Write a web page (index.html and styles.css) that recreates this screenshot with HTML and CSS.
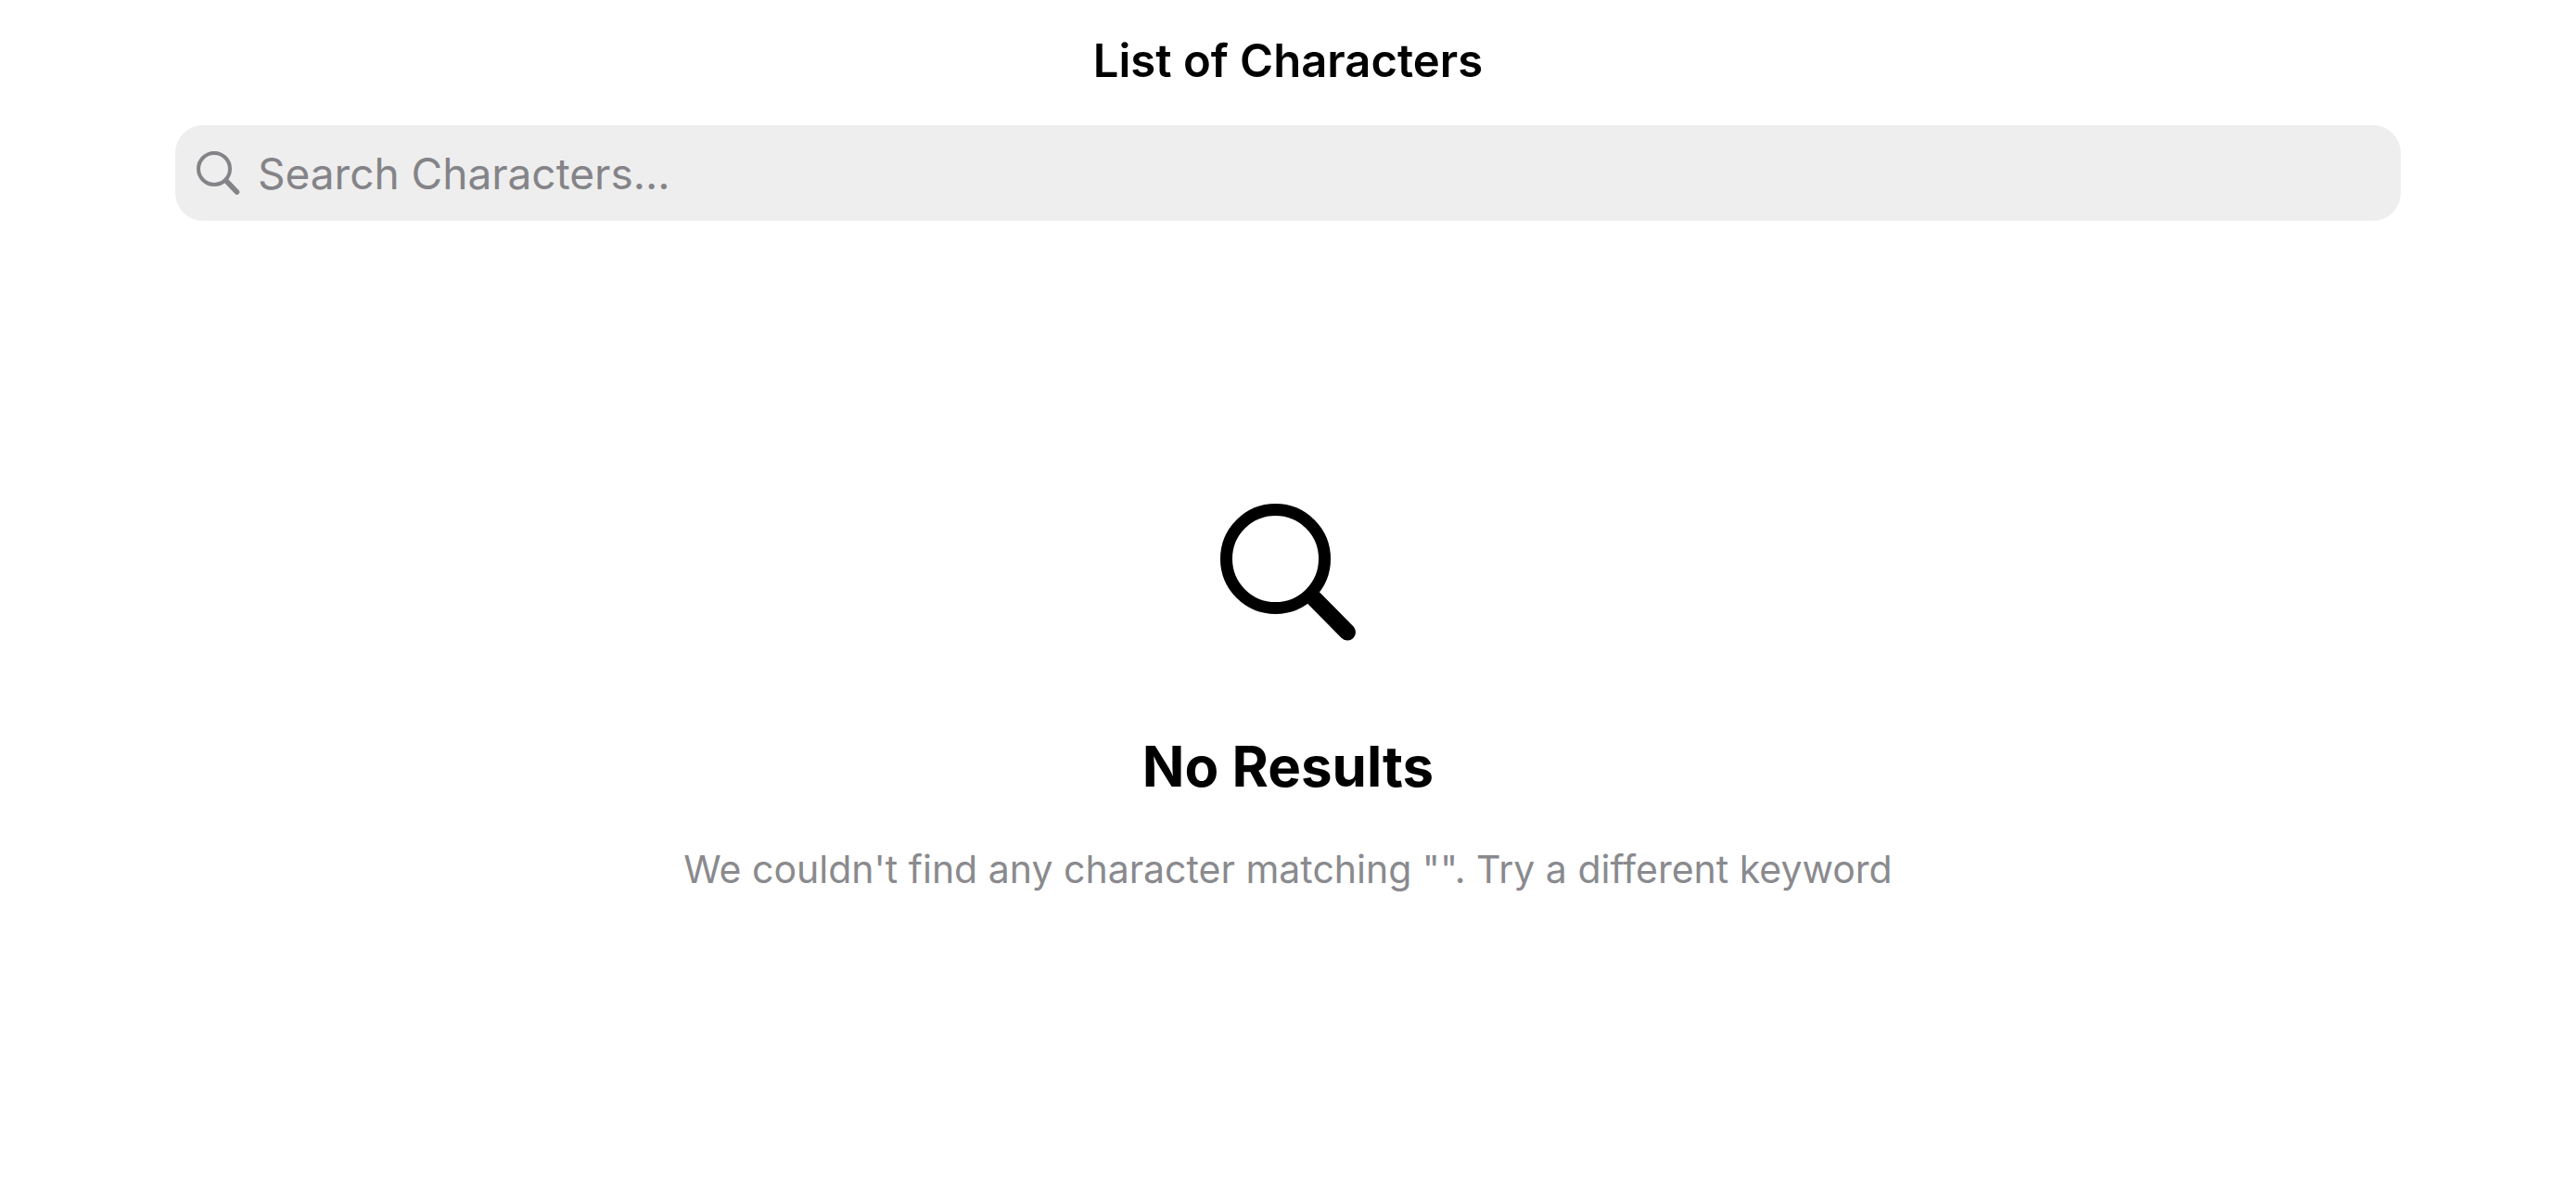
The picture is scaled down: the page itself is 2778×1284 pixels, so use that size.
FILE: index.html
```html
<!DOCTYPE html>
<html lang="en">
<head>
<meta charset="utf-8">
<title>List of Characters</title>
<link rel="stylesheet" href="styles.css">
</head>
<body>
<header class="header">
  <h1 class="title">List of Characters</h1>
  <label class="search">
    <svg class="search-icon" viewBox="0 0 48 48" aria-hidden="true"><circle cx="20" cy="19" r="17" stroke-width="4"/><path d="M33 32L44.5 44" stroke-width="5.5"/></svg>
    <input class="search-input" type="search" placeholder="Search Characters..." aria-label="Search Characters">
  </label>
</header>
<main class="empty">
  <svg class="empty-icon" viewBox="0 0 148 150" aria-hidden="true"><circle cx="60.5" cy="60.5" r="53" stroke-width="13"/><path d="M100 101L138 139.5" stroke-width="18"/></svg>
  <h2 class="empty-title">No Results</h2>
  <p class="empty-text">We couldn't find any character matching "". Try a different keyword</p>
</main>
</body>
</html>
```

FILE: styles.css
```css
body {
  margin: 0;
  background: #fff;
  color: #000;
  font-family: Inter, "Liberation Sans", sans-serif;
}

.header {
  padding: 36px 189px 0;
}

.title {
  margin: 0 0 39px;
  font-size: 49px;
  line-height: 60px;
  font-weight: 600;
  text-align: center;
}

.search {
  display: flex;
  align-items: center;
  gap: 19px;
  height: 103px;
  padding: 0 22px;
  border-radius: 30px;
  background: #eee;
}

.search-icon,
.empty-icon {
  fill: none;
  stroke: currentColor;
  stroke-linecap: round;
}

.search-icon {
  width: 48px;
  height: 48px;
  color: #848488;
}

.search-input {
  flex: 1;
  min-width: 0;
  padding: 0;
  border: 0;
  outline: 0;
  appearance: none;
  background: transparent;
  font: 400 46px/60px Inter, "Liberation Sans", sans-serif;
}

.search-input::placeholder {
  color: #848488;
  opacity: 1;
}

.empty {
  display: flex;
  flex-direction: column;
  align-items: center;
  padding: 304px 32px 32px;
  text-align: center;
}

.empty-icon {
  width: 148px;
  height: 150px;
}

.empty-title {
  margin: 94px 0 0;
  font-size: 60px;
  line-height: 80px;
  font-weight: 700;
}

.empty-text {
  margin: 40px 0 0;
  font-size: 41px;
  line-height: 62px;
  color: #8a8a8e;
}
```
